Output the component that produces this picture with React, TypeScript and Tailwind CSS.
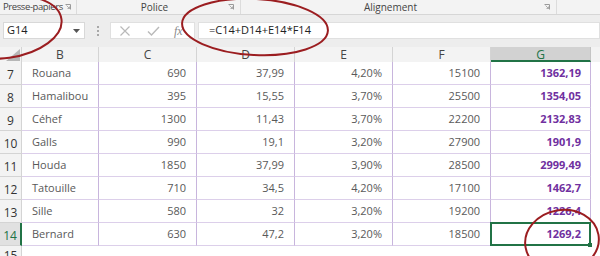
import React from 'react';

const rows = [
  ['7', 'Rouana', '690', '37,99', '4,20%', '15100', '1362,19'],
  ['8', 'Hamalibou', '395', '15,55', '3,70%', '25500', '1354,05'],
  ['9', 'Céhef', '1300', '11,43', '3,70%', '22200', '2132,83'],
  ['10', 'Galls', '990', '19,1', '3,20%', '27900', '1901,9'],
  ['11', 'Houda', '1850', '37,99', '3,90%', '28500', '2999,49'],
  ['12', 'Tatouille', '710', '34,5', '4,20%', '17100', '1462,7'],
  ['13', 'Sille', '580', '32', '3,20%', '19200', '1226,4'],
  ['14', 'Bernard', '630', '47,2', '3,20%', '18500', '1269,2'],
];

function Launcher() {
  return (
    <svg width="6" height="6" viewBox="0 0 6 6" className="text-[#9a9a9a]">
      <path d="M0.5 0.5h5v5" fill="none" stroke="currentColor" strokeWidth="1" />
      <path d="M1.5 1.5l3 3M2.5 4.5h2v-2" fill="none" stroke="currentColor" strokeWidth="0.8" />
    </svg>
  );
}

export default function App() {
  return (
    <div
      className="relative w-[600px] h-[256px] overflow-hidden bg-white"
      style={{ fontFamily: '"Open Sans", "Noto Sans", sans-serif' }}
    >
      {/* Ribbon group labels */}
      <div className="flex h-[15px] bg-[#f3f3f3] border-b border-[#d6d6d6] text-[10px] leading-[14px] text-[#444] whitespace-nowrap">
        <div className="relative flex w-[77px] items-center border-r border-[#dcdcdc] pl-[3px]">
          <span className="text-[9.5px] tracking-[-0.4px]">Presse-papiers</span>
          <div className="absolute right-[5px] top-[4px]">
            <Launcher />
          </div>
        </div>
        <div className="relative flex w-[164px] items-center justify-center border-r border-[#dcdcdc]">
          <span className="mr-[8px]">Police</span>
          <div className="absolute right-[6px] top-[4px]">
            <Launcher />
          </div>
        </div>
        <div className="relative flex w-[316px] items-center justify-center border-r border-[#dcdcdc]">
          <span className="mr-[16px]">Alignement</span>
          <div className="absolute right-[6px] top-[4px]">
            <Launcher />
          </div>
        </div>
        <div className="flex-1" />
      </div>

      {/* Formula bar */}
      <div className="flex h-[32px] items-start bg-[#ededed] pt-[7px]">
        <div className="ml-[3px] flex h-[17px] w-[82px] items-center justify-between border border-[#d8d8d8] bg-white pl-[3px] pr-[4px] text-[11px] text-[#222]">
          <span>G14</span>
          <svg width="7" height="4" viewBox="0 0 7 4">
            <path d="M0 0h7L3.5 4z" fill="#555" />
          </svg>
        </div>
        <div className="flex w-[25px] h-[17px] flex-col items-center justify-center gap-[2px]">
          <span className="block h-[2px] w-[2px] bg-[#a8a8a8]" />
          <span className="block h-[2px] w-[2px] bg-[#a8a8a8]" />
          <span className="block h-[2px] w-[2px] bg-[#a8a8a8]" />
        </div>
        <div className="flex h-[17px] w-[85px] items-center border border-[#e0e0e0] bg-white">
          <svg width="12" height="12" viewBox="0 0 12 12" className="ml-[8px]">
            <path d="M1.5 1.5l9 9M10.5 1.5l-9 9" stroke="#b9b9b9" strokeWidth="1.2" fill="none" />
          </svg>
          <svg width="13" height="12" viewBox="0 0 13 12" className="ml-[16px]">
            <path d="M1 6.5l3.5 3.5L12 2" stroke="#b9b9b9" strokeWidth="1.4" fill="none" />
          </svg>
          <span className="ml-[14px] text-[12px] italic text-[#8a8a8a]" style={{ fontFamily: '"Liberation Serif", serif' }}>
            fx
          </span>
        </div>
        <div className="ml-[3px] flex h-[17px] flex-1 items-center border border-[#e0e0e0] bg-white pl-[10px] text-[11px] text-[#222]">
          =C14+D14+E14*F14
        </div>
      </div>

      {/* Column headers */}
      <div className="flex h-[15px] bg-[#f3f3f3] text-[12px] leading-[15px] text-[#444]">
        <div className="relative w-[22px] border-r border-[#d4d4d4]">
          <svg width="14" height="12" viewBox="0 0 14 12" className="absolute right-[1px] bottom-[1px]">
            <path d="M14 0V12H0z" fill="#b6b6b6" />
          </svg>
        </div>
        <div className="w-[77px] border-r border-[#d4d4d4] text-center">B</div>
        <div className="w-[98px] border-r border-[#d4d4d4] text-center">C</div>
        <div className="w-[98px] border-r border-[#d4d4d4] text-center">D</div>
        <div className="w-[98px] border-r border-[#d4d4d4] text-center">E</div>
        <div className="w-[98px] border-r border-[#d4d4d4] text-center">F</div>
        <div className="w-[100px] border-b-2 border-r border-b-[#217346] border-r-[#c4c4c4] bg-[#d2d2d2] text-center text-[#217346]">
          G
        </div>
        <div className="flex-1" />
      </div>

      {/* Rows */}
      <div className="text-[11px] text-[#595959]">
        {rows.map((r) => {
          const sel = r[0] === '14';
          return (
            <div key={r[0]} className="flex h-[23px]">
              <div
                className={
                  sel
                    ? 'flex w-[22px] items-center justify-center border-b border-r-2 border-b-[#d4d4d4] border-r-[#217346] bg-[#e1e1e1] pt-[3px] text-[12px] text-[#217346]'
                    : 'flex w-[22px] items-center justify-center border-b border-r border-[#d4d4d4] bg-[#f3f3f3] pt-[3px] text-[12px] text-[#333]'
                }
              >
                {r[0]}
              </div>
              <div className="flex w-[77px] items-center border-b border-r border-b-[#dccfea] border-r-[#c8b5dd] pl-[10px]">
                {r[1]}
              </div>
              {[r[2], r[3], r[4], r[5]].map((v, j) => (
                <div
                  key={j}
                  className="flex w-[98px] items-center justify-end border-b border-r border-b-[#dccfea] border-r-[#c8b5dd] pr-[10px]"
                >
                  {v}
                </div>
              ))}
              <div className="relative flex w-[100px] items-center justify-end border-b border-r border-b-[#dccfea] border-r-[#c8b5dd] pr-[9px] font-bold text-[#7030a0]">
                {r[6]}
                {sel && (
                  <div className="absolute -left-[1px] -top-[1px] h-[24px] w-[101px] border-2 border-[#217346]">
                    <span className="absolute -bottom-[3px] -right-[3px] h-[4px] w-[4px] bg-[#217346]" />
                  </div>
                )}
              </div>
              <div className="flex-1" />
            </div>
          );
        })}
        <div className="flex h-[23px]">
          <div className="flex w-[22px] items-start justify-center border-r border-[#d4d4d4] bg-[#f3f3f3] pt-[1px] text-[12px] text-[#333]">
            15
          </div>
          <div className="flex-1" />
        </div>
      </div>

      {/* Red annotation ellipses */}
      <svg
        className="pointer-events-none absolute left-0 top-0"
        width="600"
        height="256"
        viewBox="0 0 600 256"
      >
        <g fill="none" stroke="#9b1d20" strokeWidth="2">
          <ellipse cx="5" cy="27" rx="57" ry="31" transform="rotate(-8 5 27)" />
          <ellipse cx="255" cy="27" rx="73" ry="28" transform="rotate(3 255 27)" />
          <ellipse cx="562" cy="241" rx="37" ry="31" transform="rotate(-10 562 241)" />
        </g>
      </svg>
    </div>
  );
}
